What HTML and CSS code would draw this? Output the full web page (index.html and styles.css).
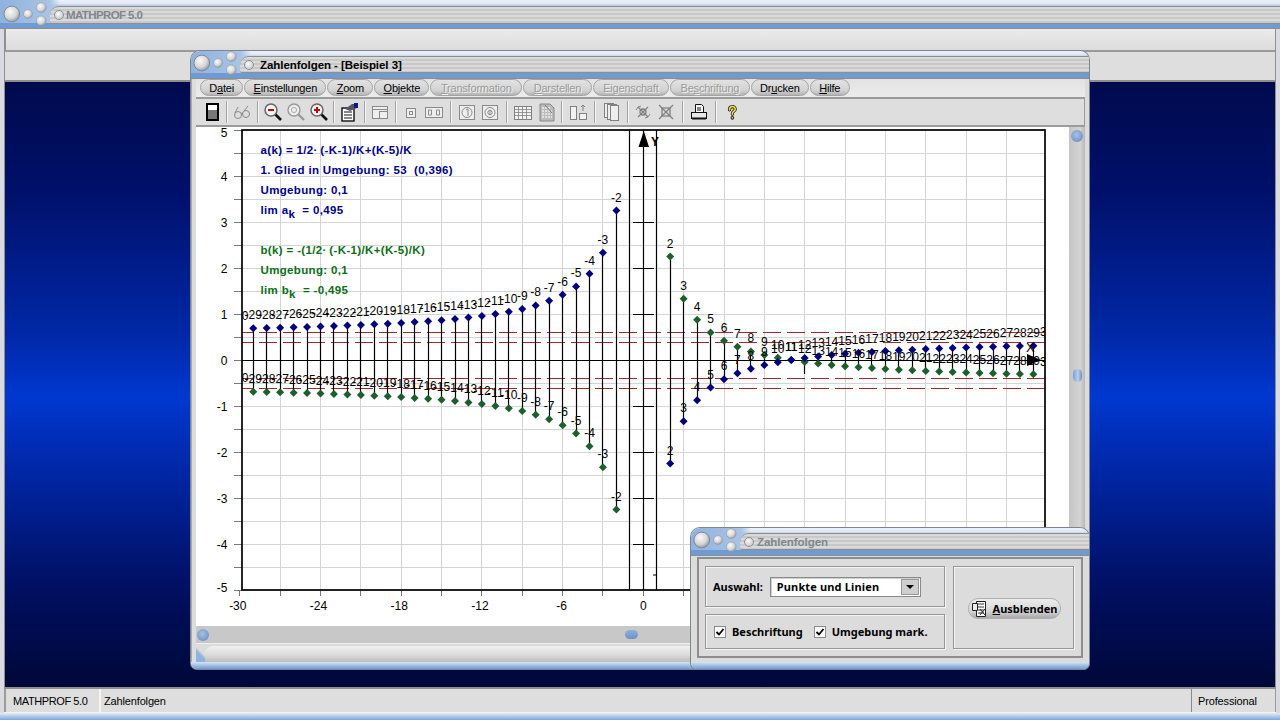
FILE: index.html
```html
<!DOCTYPE html>
<html lang="de">
<head>
<meta charset="utf-8">
<title>MATHPROF 5.0</title>
<link rel="stylesheet" href="styles.css">
</head>
<body>
<div class="app">
  <header class="titlebar titlebar-app">
    <div class="tb-row">
      <svg class="orbs" viewBox="0 0 50 24"><use href="#orbset"/></svg>
      <div class="groove"><span class="groove-dot"></span><span class="title title-dim title-app">MATHPROF 5.0</span></div>
    </div>
  </header>
  <div class="appbar"></div>
  <div class="workspace">
    <div class="appbar2"></div>
    <div class="desktop"></div>

    <section class="win win-main">
      <div class="titlebar">
        <div class="tb-row">
          <svg class="orbs" viewBox="0 0 50 24"><use href="#orbset"/></svg>
          <div class="groove"><span class="groove-dot"></span><span class="title">Zahlenfolgen - [Beispiel 3]</span></div>
        </div>
      </div>
      <div class="win-inner">
        <nav class="menu">
          <span class="pill">D<u>a</u>tei</span>
          <span class="pill"><u>E</u>instellungen</span>
          <span class="pill"><u>Z</u>oom</span>
          <span class="pill"><u>O</u>bjekte</span>
          <span class="pill off"><u>T</u>ransformation</span>
          <span class="pill off"><u>D</u>arstellen</span>
          <span class="pill off">Ei<u>g</u>enschaft</span>
          <span class="pill off">Be<u>s</u>chriftung</span>
          <span class="pill">Dr<u>u</u>cken</span>
          <span class="pill"><u>H</u>ilfe</span>
        </nav>
        <div class="toolbar">
          <span class="ic"><svg viewBox="0 0 20 20"><rect x="5" y="2" width="11" height="16" fill="#777" stroke="#000" stroke-width="2"/><rect x="6" y="3" width="9" height="5" fill="#fff"/></svg></span>
          <i class="sep"></i>
          <span class="ic"><svg viewBox="0 0 20 20" fill="none" stroke="#8a8a8a"><circle cx="6" cy="13" r="3.5"/><circle cx="14" cy="12" r="3.5"/><path d="M9 12c1-1 1-1 2-1M3 11l3-6M12 9l4-5"/></svg></span>
          <i class="sep"></i>
          <span class="ic"><svg viewBox="0 0 20 20"><path d="M11 11l7 7" stroke="#111" stroke-width="2.6"/><circle cx="8" cy="8" r="6" fill="#f4f4f4" stroke="#666" stroke-width="1.5"/><path d="M5 8h6" stroke="#c00" stroke-width="2"/></svg></span>
          <span class="ic"><svg viewBox="0 0 20 20"><path d="M11 11l7 7" stroke="#999" stroke-width="2.4"/><circle cx="8" cy="8" r="6" fill="#eee" stroke="#999" stroke-width="1.4"/><circle cx="8" cy="8" r="2.6" fill="none" stroke="#aaa"/></svg></span>
          <span class="ic"><svg viewBox="0 0 20 20"><path d="M11 11l7 7" stroke="#111" stroke-width="2.6"/><circle cx="8" cy="8" r="6" fill="#f4f4f4" stroke="#666" stroke-width="1.5"/><path d="M5 8h6M8 5v6" stroke="#c00" stroke-width="2"/></svg></span>
          <i class="sep"></i>
          <span class="ic"><svg viewBox="0 0 20 20"><rect x="3" y="6" width="12" height="13" fill="#fff" stroke="#111" stroke-width="1.4"/><path d="M5 10h8M5 13h8M5 16h8" stroke="#111"/><path d="M6 7l7-5 5 0 0 4-7 3z" fill="#556"/><rect x="15" y="1" width="4" height="5" fill="#14148c"/></svg></span>
          <i class="sep"></i>
          <span class="ic"><svg viewBox="0 0 20 20" fill="#eee" stroke="#8a8a8a"><rect x="2.5" y="4.5" width="15" height="12"/><path d="M2.5 7.5h15"/><rect x="9.5" y="9.5" width="8" height="7"/></svg></span>
          <i class="sep wide-a"></i>
          <span class="ic"><svg viewBox="0 0 20 20" fill="#eee" stroke="#8a8a8a"><rect x="5.5" y="6.5" width="9" height="9"/><rect x="8.5" y="9.5" width="3" height="3" fill="none"/></svg></span>
          <span class="ic"><svg viewBox="0 0 20 20" fill="#eee" stroke="#8a8a8a"><rect x="1.5" y="5.5" width="17" height="10"/><path d="M4.5 8v5h3V8zM12.500 8v5h3V8z" fill="none"/></svg></span>
          <i class="sep wide"></i>
          <span class="ic"><svg viewBox="0 0 20 20" fill="none" stroke="#8a8a8a"><rect x="2.500" y="3.500" width="15" height="14" fill="#eee"/><circle cx="10" cy="10.500" r="5"/><path d="M9 8l2-1v7"/></svg></span>
          <span class="ic"><svg viewBox="0 0 20 20" fill="none" stroke="#8a8a8a"><rect x="2.500" y="3.500" width="15" height="14" fill="#eee"/><circle cx="10" cy="10.500" r="5"/><circle cx="10" cy="10.500" r="2.200"/><path d="M10 8v5"/></svg></span>
          <i class="sep wide"></i>
          <span class="ic"><svg viewBox="0 0 20 20" fill="#f2f2f2" stroke="#808080"><rect x="1.500" y="4.500" width="17" height="13"/><path d="M1.500 7.500h17M1.500 10.500h17M1.500 13.500h17M5.500 5v12M9.500 5v12M13.500 5v12" stroke-width=".8"/></svg></span>
          <span class="ic"><svg viewBox="0 0 20 20"><path d="M4 2h10l4 4v13H4z" fill="#bbb" stroke="#888"/><path d="M6 6h8M6 9h10M6 12h10M6 15h10" stroke="#eee" stroke-width="1.400" stroke-dasharray="2 1"/><path d="M9 3l7 8" stroke="#777"/></svg></span>
          <i class="sep wide"></i>
          <span class="ic"><svg viewBox="0 0 20 20" fill="#f2f2f2" stroke="#808080"><rect x="2.500" y="4.500" width="6" height="13"/><rect x="11.500" y="11.500" width="7" height="6"/><path d="M15 9V3M13 5l2-2 2 2" fill="none"/></svg></span>
          <i class="sep wide"></i>
          <span class="ic"><svg viewBox="0 0 20 20" fill="#eee" stroke="#808080"><rect x="3.500" y="1.500" width="9" height="14"/><rect x="6.500" y="2.500" width="9" height="15"/><rect x="9.500" y="3.500" width="8" height="15"/></svg></span>
          <i class="sep wide"></i>
          <span class="ic"><svg viewBox="0 0 20 20" fill="none" stroke="#808080" stroke-width="1.300"><path d="M5 5l10 10M15 5L5 15"/><circle cx="10" cy="10" r="3"/><path d="M3 8l2-3 3-1M17 12l-2 3-3 1" stroke-width=".9"/></svg></span>
          <span class="ic"><svg viewBox="0 0 20 20" fill="none" stroke="#808080" stroke-width="1.300"><path d="M3 3l14 14M17 3L3 17"/><rect x="6" y="6" width="8" height="8"/></svg></span>
          <i class="sep wide"></i>
          <span class="ic"><svg viewBox="0 0 20 20"><path d="M6.500 2.500h6l2 2v6h-8z" fill="#fff" stroke="#111"/><path d="M8 6h4M8 8h4" stroke="#111"/><rect x="2.500" y="10.500" width="15" height="6" fill="#e8e8e8" stroke="#111"/><path d="M3 16.500h14" stroke="#111" stroke-width="2"/></svg></span>
          <i class="sep wide"></i>
          <span class="ic"><svg viewBox="-4 -3 28 26" fill="none" stroke-linecap="round"><path d="M6.500 7c0-6 8-6 8-1 0 3-4 3-4 6v1" stroke="#222" stroke-width="4.500"/><path d="M10.500 18v.5" stroke="#222" stroke-width="5"/><path d="M6.500 7c0-6 8-6 8-1 0 3-4 3-4 6v1" stroke="#f4e23a" stroke-width="2.200"/><path d="M10.500 18v.5" stroke="#f4e23a" stroke-width="2.200"/></svg></span>
        </div>
        <div class="plot-row">
          <svg id="plot" class="plot" viewBox="196 127 873 499" aria-label="Zahlenfolgen Diagramm"></svg>
          <div class="vscroll"><span class="knob"></span><span class="thumb-v"></span></div>
        </div>
        <div class="hscroll"><span class="knob"></span><span class="thumb-h"></span></div>
        <div class="strip"><span class="strip-in"></span></div>
      </div>
      <div class="win-foot"></div>
    </section>

    <section class="win win-sub">
      <div class="titlebar">
        <div class="tb-row">
          <svg class="orbs" viewBox="0 0 50 24"><use href="#orbset"/></svg>
          <div class="groove"><span class="groove-dot"></span><span class="title title-dim">Zahlenfolgen</span></div>
        </div>
      </div>
      <div class="sub-body">
        <div class="sub-left">
          <div class="group group-top">
            <span class="lbl">Auswahl:</span>
            <span class="select"><span class="select-val">Punkte und Linien</span><span class="select-btn"></span></span>
          </div>
          <div class="group group-bot">
            <span class="cb"><svg viewBox="0 0 10 10"><path d="M1.500 5l2.500 2.500L8.500 2" fill="none" stroke="#000" stroke-width="1.800"/></svg></span>
            <span class="lbl cb-a">Beschriftung</span>
            <span class="cb"><svg viewBox="0 0 10 10"><path d="M1.500 5l2.500 2.500L8.500 2" fill="none" stroke="#000" stroke-width="1.800"/></svg></span>
            <span class="lbl cb-b">Umgebung mark.</span>
          </div>
        </div>
        <div class="group sub-right">
          <span class="btn">
            <svg class="btn-ic" viewBox="0 0 18 18"><path d="M5.500 1.500h9v15h-9z" fill="#fff" stroke="#222"/><path d="M7 4h6M7 7h6M7 10h6M7 13h6" stroke="#333"/><path d="M1.500 3.500h5v7h-5z" fill="#eee" stroke="#222"/><path d="M9 9l5 6M14 9l-5 6" stroke="#222"/></svg>
            <span class="lbl"><u>A</u>usblenden</span>
          </span>
        </div>
      </div>
      <div class="win-foot"></div>
    </section>
  </div>
  <footer class="status">
    <span class="panel p1">MATHPROF 5.0</span>
    <span class="panel p2">Zahlenfolgen</span>
    <span class="panel p3">Professional</span>
  </footer>
  <div class="app-foot"></div>
</div>

<svg class="defs" width="0" height="0" aria-hidden="true">
  <defs>
    <radialGradient id="orb" cx="40%" cy="35%" r="70%">
      <stop offset="0" stop-color="#fafafa"/><stop offset=".6" stop-color="#d6d6d6"/><stop offset="1" stop-color="#8d939b"/>
    </radialGradient>
    <g id="orbset">
      <circle cx="11" cy="13" r="8" fill="url(#orb)" stroke="#7d8794"/>
      <circle cx="27.500" cy="13" r="4.500" fill="url(#orb)" stroke="#8f98a4" stroke-width=".6"/>
      <circle cx="41" cy="6.500" r="5" fill="url(#orb)" stroke="#8f98a4" stroke-width=".6"/>
      <circle cx="41" cy="20" r="5" fill="url(#orb)" stroke="#8f98a4" stroke-width=".6"/>
    </g>
  </defs>
</svg>
<script src="plot.js"></script>
</body>
</html>
```
FILE: styles.css
```css
* { box-sizing: border-box; }
html, body { margin: 0; padding: 0; }
body { width: 1280px; height: 720px; overflow: hidden; font-family: "Liberation Sans", Arial, sans-serif; font-size: 11px; color: #000; background: #c6c8cc; }
.defs { position: absolute; }

.app { width: 1280px; height: 720px; display: flex; flex-direction: column; background: #d9dbe0; }

/* title bars */
.titlebar { flex: none; height: 27px; background: linear-gradient(180deg, #eef2fa 0, #dfe6f3 4px, #b9cde8 5px, #b9cde8 100%); border-bottom: 5px solid #6f9bd2; position: relative; box-shadow: 0 1px 0 #8d8d8d, inset 0 -1px 0 #8d8d8d; }
.titlebar-app { height: 28px; border-bottom-width: 5px; }
.tb-row { display: flex; height: 22px; background: linear-gradient(90deg, #8fb2de 0, #a9c4e6 50px, transparent 60px); }
.titlebar-app .tb-row { height: 23px; padding-left: 1px; }
.orbs { flex: none; width: 49px; height: 24px; margin-top: -1px; overflow: visible; }
.titlebar-app .orbs { margin-top: 1px; }
.groove { flex: 1; display: flex; align-items: center; height: 17px; margin-top: 5px; padding-left: 4px; border-radius: 9px 0 0 2px; border-top: 1px solid #8d8d8d; border-bottom: 1px solid #8f8f8f; background: repeating-linear-gradient(180deg, #dadada 0, #dadada 2px, #c8c8c8 2px, #c8c8c8 4px); }
.titlebar-app .groove { margin-top: 6px; height: 18px; }
.groove-dot { flex: none; width: 10px; height: 10px; border-radius: 50%; border: 1px solid #8a8f96; background: radial-gradient(circle at 40% 35%, #fafafa, #d0d0d0 70%); }
.title { margin-left: 6px; font-weight: 700; font-size: 11.500px; letter-spacing: -.05px; color: #000; white-space: nowrap; }
.title-dim { color: #7f868e; margin-left: 3px; }
.title-app { margin-left: 2px; letter-spacing: -.6px; }

/* application bars */
.appbar { flex: none; height: 22px; margin: 0 4px; border-left: 2px solid #8f8f8f; border-right: 1px solid #8f8f8f; background: linear-gradient(180deg, #ececec, #dcdcdc); }
.workspace { flex: none; height: 637px; position: relative; margin: 0 4px; display: flex; flex-direction: column; border-left: 1px solid #8f8f8f; border-right: 1px solid #8f8f8f; }
.appbar2 { flex: none; height: 32px; border-top: 2px solid #9a9a9a; border-bottom: 2px solid #8f8f8f; background: #dedede; }
.desktop { flex: 1; background: linear-gradient(180deg, #000a4c 0, #00106a 18%, #0028a8 42%, #0038d0 52%, #0024a0 66%, #000f60 84%, #000838 100%); }

/* windows */
.win { position: absolute; display: flex; flex-direction: column; background: #dcdcdc; border-radius: 9px 9px 6px 6px; overflow: hidden; box-shadow: 0 0 0 1px #7d8590; }
.win-main { left: 186px; top: 1px; width: 898px; height: 618px; }
.win-sub { left: 686px; top: 478px; width: 398px; height: 141px; }
.win-foot { flex: none; height: 7px; background: linear-gradient(180deg, #d6e4f5, #6f9bd2); }

.win-inner { flex: 1; display: flex; flex-direction: column; padding: 0 4px 0 4px; min-height: 0; border-left: 1px solid #aaa; }

/* menu */
.menu { flex: none; height: 21px; display: flex; align-items: center; gap: 1px; padding: 0 0 0 4px; border-bottom: 2px solid #9b9b9b; background: linear-gradient(180deg, #e2e2e2, #ececec); }
.pill { height: 17px; line-height: 16px; padding: 0 8.300px; letter-spacing: -.2px; border-radius: 9px; border: 1px solid #a3a3a3; background: linear-gradient(180deg, #e2e2e2, #d2d2d2 70%, #b4b4b4); white-space: nowrap; }
.pill.off { padding: 0 9.500px; color: #9a9a9a; text-shadow: 1px 1px 0 #f1f1f1; }

/* toolbar */
.toolbar { flex: none; height: 28px; display: flex; align-items: center; padding-left: 4px; border-bottom: 2px solid #9b9b9b; border-right: 1px solid #9b9b9b; background: #dedede; }
.ic { flex: none; width: 23px; display: flex; justify-content: center; }
.ic svg { width: 20px; height: 20px; display: block; }
.sep { flex: none; width: 1px; height: 22px; margin: 0 3.300px; background: #a3a3a3; box-shadow: 1px 0 0 #f6f6f6; }
.sep.wide-a { margin: 0 3.800px; }
.sep.wide { margin: 0 4.300px; }

/* plot area */
.plot-row { flex: none; height: 499px; display: flex; background: #fff; }
.plot { flex: none; width: 873px; height: 499px; display: block; background: #fff; }
.plot text { font-family: "Liberation Sans", Arial, sans-serif; font-size: 12px; fill: #000; }
.plot .legend { font-size: 11.500px; font-weight: 700; letter-spacing: .35px; white-space: pre; }
.plot .blue { fill: #00008c; }
.plot .green { fill: #0b6e16; }
.vscroll { flex: none; width: 16px; display: flex; flex-direction: column; align-items: center; padding-top: 3px; background: linear-gradient(90deg, #c4c4c4, #d4d4d4 70%, #b8b8b8); }
.knob { flex: none; width: 12px; height: 12px; border-radius: 50%; background: radial-gradient(circle at 45% 40%, #a8c2e6, #7497cc 70%, #58709a); }
.thumb-v { flex: none; width: 9px; height: 13px; margin-top: 227px; border-radius: 5px; background: linear-gradient(90deg, #7aa0d4, #b9cfec 55%, #6f90c2); }
.hscroll { flex: none; height: 18px; display: flex; align-items: center; padding-left: 1px; background: #c8c8c8; border-bottom: 1px solid #eee; }
.thumb-h { flex: none; width: 13px; height: 9px; margin-left: 416px; border-radius: 5px; background: linear-gradient(180deg, #8fb0de, #6f90c2); }
.strip { flex: 1; padding: 2px 0 0 0; background: linear-gradient(45deg, #8fb2de 0, #8fb2de 8px, #dcdcdc 11px); min-height: 0; }
.strip-in { display: block; height: 100%; margin-left: 9px; border-radius: 8px 0 0 0; background: linear-gradient(180deg, #f0f0f0, #dcdcdc 55%, #bdbdbd); }

/* sub window */
.sub-body { flex: 1; display: flex; gap: 8px; padding: 7px 7px 7px 6px; margin: 2px 6px 4px 6px; border: 2px solid #8d8d8d; background: #dcdcdc; min-height: 0; }
.sub-left { flex: none; width: 240px; display: flex; flex-direction: column; gap: 7px; }
.group { border: 1px solid #979797; box-shadow: inset 1px 1px 0 #f4f4f4, 1px 1px 0 #f4f4f4; }
.group-top { flex: none; height: 41px; display: flex; align-items: center; padding-left: 7px; }
.group-bot { flex: 1; display: flex; align-items: center; padding-left: 8px; }
.sub-right { flex: none; width: 121px; display: flex; justify-content: center; align-items: center; padding: 2px 0 0 1px; }
.lbl { font-family: "Noto Sans", sans-serif; font-weight: 700; font-size: 11px; white-space: nowrap; }
.select { margin-left: 7px; width: 151px; height: 20px; display: flex; align-items: center; background: #fff; border: 1px solid #8a8a8a; box-shadow: inset 1px 1px 0 #d0d0d0; }
.select-val { flex: 1; padding-left: 6px; font-family: "Noto Sans", sans-serif; font-weight: 700; font-size: 11px; letter-spacing: .15px; }
.select-btn { flex: none; width: 18px; height: 16px; margin-right: 1px; border: 1px solid #999; background: #cfcfcf; display: flex; align-items: center; justify-content: center; }
.select-btn::after { content: ""; border-left: 4px solid transparent; border-right: 4px solid transparent; border-top: 4px solid #000; }
.cb { flex: none; width: 12px; height: 12px; padding: 0; border: 1px solid #8a8a8a; background: #fff; display: block; }
.cb svg { display: block; width: 10px; height: 10px; }
.cb-a { margin-left: 6px; margin-right: 11px; }
.cb-b { margin-left: 6px; }
.btn { display: flex; align-items: center; gap: 4px; width: 93px; height: 21px; padding-left: 2px; border-radius: 10px; border: 1px solid #b0b0b0; background: linear-gradient(180deg, #ececec, #d6d6d6 65%, #a8a8a8); }
.btn-ic { flex: none; width: 18px; height: 18px; }

/* status bar */
.status { flex: none; height: 26px; display: flex; margin: 0 4px; background: #dedede; border-top: 2px solid #8f8f8f; border-bottom: 1px solid #f2f2f2; }
.panel { display: flex; align-items: center; height: 23px; padding-left: 7px; font-size: 11px; letter-spacing: -.15px; border-left: 2px solid #9b9b9b; }
.p1 { width: 95px; letter-spacing: -.4px; }
.p2 { flex: 1; padding-left: 3px; border-left: 2px solid #f4f4f4; }
.p3 { width: 85px; padding-left: 6px; border-left: 1px solid #8a8a8a; border-right: 1px solid #9b9b9b; }
.app-foot { flex: 1; background: linear-gradient(180deg, #e4ecf7, #7ea5d8); }
```
FILE: plot.js
```js
(function () {
  var NS = 'http://www.w3.org/2000/svg';
  var svg = document.getElementById('plot');
  var L = 242, R = 1045, T = 130, B = 590;
  var X = function (k) { return 643.3 + 13.45 * k; };
  var Y = function (v) { return 360 - 46 * v; };
  var snap = function (p) { return Math.floor(p) + 0.5; };

  function el(name, attrs, parent, text) {
    var n = document.createElementNS(NS, name);
    for (var a in attrs) n.setAttribute(a, attrs[a]);
    if (text !== undefined) n.textContent = text;
    (parent || svg).appendChild(n);
    return n;
  }
  function line(x1, y1, x2, y2, stroke, w, parent, dash) {
    var at = { x1: x1, y1: y1, x2: x2, y2: y2, stroke: stroke, 'stroke-width': w };
    if (dash) at['stroke-dasharray'] = dash;
    return el('line', at, parent);
  }

  var defs = el('defs', {});
  var cp = el('clipPath', { id: 'frame' }, defs);
  el('rect', { x: L, y: T, width: R - L, height: B - T }, cp);

  var k, v;
  // grid, outer ticks, axis numbers
  for (k = -30; k <= 30; k += 3) {
    var gx = snap(X(k));
    if (gx > L && gx < R) line(gx, T, gx, B, '#d4d4d4', 1);
    if (gx < R) line(gx, B, gx, B + 6, '#777', 1);
  }
  for (v = -5; v <= 5; v += 0.5) {
    line(L, snap(Y(v)), R, snap(Y(v)), '#d4d4d4', 1);
    line(L - 8, snap(Y(v)), L, snap(Y(v)), '#777', 1);
  }
  for (v = -5; v <= 5; v++) {
    var cy = v === 5 ? 132 : v === -5 ? 587 : Y(v);
    el('text', { x: 227.5, y: cy + 4.5, 'text-anchor': 'end' }, svg, String(v));
  }
  for (k = -30; k <= 30; k += 6) {
    el('text', { x: X(k) - (k < -6 ? 2 : k === -6 ? 1 : 0), y: 609.5, 'text-anchor': 'middle' }, svg, String(k));
  }

  var g = el('g', { 'clip-path': 'url(#frame)' });

  // tolerance bands around the limits (+0,495 and -0,495 with 0,1)
  [332.5, 342.5, 378.5, 388.5].forEach(function (y) {
    line(235, y, R, y, '#a5282c', 1, g, '18 6');
  });

  // axes
  line(L, 360.5, R, 360.5, '#000', 1, g);
  line(snap(X(0)), T, snap(X(0)), B, '#000', 1.2, g);
  for (v = -4; v <= 4; v++) if (v) line(633, snap(Y(v)), 654, snap(Y(v)), '#000', 1, g);

  function a(n) { return 0.5 - 5.5 / n; }

  // stems
  for (k = -29; k <= 29; k++) {
    if (!k) continue;
    if (k === 11) continue;
    var hi = Math.min(Math.abs(a(k)), 5.2);
    line(snap(X(k)), Y(hi), snap(X(k)), Y(-hi), '#000', 1.2, g);
  }
  line(snap(X(12)), 360, snap(X(12)), 374, '#000', 1.2, g);

  function diamond(x, y, fill) {
    el('polygon', { points: [x, y - 4, x + 4, y, x, y + 4, x - 4, y].join(' '), fill: fill }, g);
  }
  function label(k, v) {
    var p = Y(v);
    if (p < T - 5 || p > B + 5) return;
    el('text', { x: X(k), y: p - 9, 'text-anchor': 'middle' }, g, String(k));
  }

  // points and numbers: a(k) blue, b(k) = -a(k) green
  for (k = -30; k <= 30; k++) {
    if (!k || Math.abs(k) === 1) continue;
    if (Math.abs(k) !== 30) {
      diamond(X(k), Y(-a(k)), '#1c5f2c');
      diamond(X(k), Y(a(k)), '#00007e');
    }
    label(k, a(k));
    label(k, -a(k));
  }
  line(653, 575, 657, 575, '#000', 1, g);

  // frame
  el('rect', { x: L, y: T, width: R - L, height: B - T, fill: 'none', stroke: '#000', 'stroke-width': 1.7 });

  // axis arrows and names
  el('polygon', { points: '643.8,131 649,147 638.500,147', fill: '#000' });
  el('text', { x: 651, y: 146, 'font-weight': 700 }, svg, 'Y');
  el('polygon', { points: '1041,360 1027,354 1027,366', fill: '#000' }, g);
  el('text', { x: 1026, y: 352, style: 'font-size:13px' }, g, 'X');

  // legend
  function legend(y, cls, parts) {
    var t = el('text', { x: 260.5, y: y, 'class': 'legend ' + cls });
    parts.forEach(function (p) {
      el('tspan', p.sub ? { dy: 4 } : p.up ? { dy: -4 } : {}, t, p.t);
    });
  }
  legend(154, 'blue', [{ t: 'a(k) = 1/2\u00b7\u2009(-K-1)/K+(K-5)/K' }]);
  legend(174, 'blue', [{ t: '1. Glied in Umgebung: 53  (0,396)' }]);
  legend(194, 'blue', [{ t: 'Umgebung: 0,1' }]);
  legend(214, 'blue', [{ t: 'lim a' }, { t: 'k', sub: 1 }, { t: '  = 0,495', up: 1 }]);
  legend(254, 'green', [{ t: 'b(k) = -(1/2\u00b7\u2009(-K-1)/K+(K-5)/K)' }]);
  legend(274, 'green', [{ t: 'Umgebung: 0,1' }]);
  legend(294, 'green', [{ t: 'lim b' }, { t: 'k', sub: 1 }, { t: '  = -0,495', up: 1 }]);
})();
```
